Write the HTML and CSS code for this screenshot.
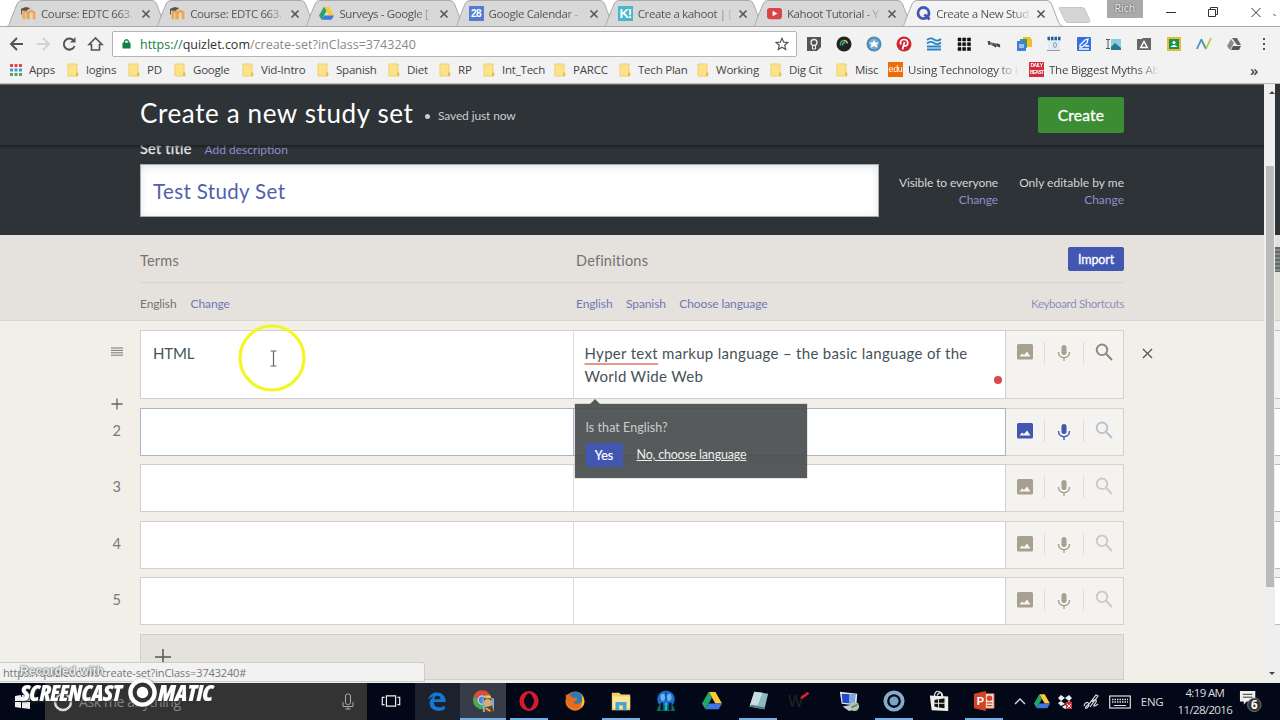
FILE: index.html
```
<!DOCTYPE html>
<html lang="en">
<head>
<meta charset="utf-8">
<title>Create a New Study Set</title>
<link rel="stylesheet" href="styles.css">
</head>
<body>
<svg class="defs" width="0" height="0">
  <defs>
    <symbol id="tab" viewBox="0 0 162 27"><path d="M0 26.5C4 26 3 24 5 19L11 4Q12.500 .5 16 .5H146Q149 .5 150.500 4L157 21Q159 26 162 26.500Z" stroke="#aaa"/></symbol>
    <symbol id="moodle" viewBox="0 0 16 14"><path d="M3 13V6q2-3 4 0v7M8 13V6q3-3 6 0v7" fill="none" stroke="#efa64b" stroke-width="2.700"/><path d="M0 2 5 0l5 1-4 3H1v4H0z" fill="#555"/></symbol>
    <symbol id="drive" viewBox="0 0 24 22"><path d="M8 0h8l8 14h-8z" fill="#fbc934"/><path d="M8 0 0 14l4 7 8-14z" fill="#23a566"/><path d="M8 14h16l-4 7H4z" fill="#3f76df"/></symbol>
    <symbol id="x" viewBox="0 0 10 10"><path d="M1.500 1.500l7 7m0-7-7 7" fill="none" stroke="currentColor" stroke-width="1.600"/></symbol>
    <symbol id="thinx" viewBox="0 0 10 10"><path d="M1.500 1.500l7 7m0-7-7 7" fill="none" stroke="currentColor" stroke-width="1"/></symbol>
    <symbol id="folder" viewBox="0 0 12 14"><path d="M1 1h9v9h1v3H1z" fill="#fde28a" stroke="#efcf6c"/><path d="M9 13v-3l2-1v4z" fill="#e5bd50"/></symbol>
    <symbol id="image" viewBox="0 0 16 16"><rect width="16" height="15.500" rx="1.500" fill="currentColor"/><path d="M2.500 12.500 5 9.500l2 1.500 3-3.500 3.500 5z" fill="#f8f6f2"/></symbol>
    <symbol id="mic" viewBox="0 0 14 18"><rect x="4.500" y="1" width="5" height="10" rx="2.500" fill="currentColor"/><path d="M1.500 8c0 7.500 11 7.500 11 0M7 13.500V17" fill="none" stroke="currentColor" stroke-width="1.400"/></symbol>
    <symbol id="search" viewBox="0 0 18 18"><circle cx="7" cy="6.800" r="5.300" fill="none" stroke="currentColor" stroke-width="1.900"/><path d="M11 10.800 17 17" stroke="currentColor" stroke-width="2"/></symbol>
  </defs>
</svg>

<header class="browser">
  <div class="tabs">
    <div class="tab"><svg class="shape"><use href="#tab"/></svg><svg class="fav"><use href="#moodle"/></svg><span class="label">Course: EDTC 663.</span><svg class="close"><use href="#x"/></svg></div>
    <div class="tab"><svg class="shape"><use href="#tab"/></svg><svg class="fav"><use href="#moodle"/></svg><span class="label">Course: EDTC 663.</span><svg class="close"><use href="#x"/></svg></div>
    <div class="tab"><svg class="shape"><use href="#tab"/></svg><svg class="fav"><use href="#drive"/></svg><span class="label">Surveys - Google [</span><svg class="close"><use href="#x"/></svg></div>
    <div class="tab"><svg class="shape"><use href="#tab"/></svg><span class="fav cal">28</span><span class="label">Google Calendar -</span><svg class="close"><use href="#x"/></svg></div>
    <div class="tab"><svg class="shape"><use href="#tab"/></svg><span class="fav kahoot">K!</span><span class="label">Create a kahoot | [</span><svg class="close"><use href="#x"/></svg></div>
    <div class="tab"><svg class="shape"><use href="#tab"/></svg><svg class="fav" viewBox="0 0 16 14"><rect y="1" width="16" height="12" rx="3" fill="#d9444b"/><path d="m6 4 5 3-5 3z" fill="#fff"/></svg><span class="label">Kahoot Tutorial - Y</span><svg class="close"><use href="#x"/></svg></div>
    <div class="tab active"><svg class="shape"><use href="#tab"/></svg><svg class="fav" viewBox="0 0 16 16"><circle cx="8" cy="7.500" r="5.900" fill="none" stroke="#4257b2" stroke-width="3"/><path d="m9 9 5.500 5.500" stroke="#4257b2" stroke-width="3"/></svg><span class="label">Create a New Stud</span><svg class="close"><use href="#x"/></svg></div>
    <svg class="newtab" viewBox="0 0 32 16"><path d="M1 .5h22q2 0 3 2l5 11q0 2-2 2H9q-2 0-3-2L.5 2Q0 .5 1 .5z" fill="#d4d4d4" stroke="#c6c6c6"/></svg>
    <span class="user">Rich</span>
    <svg class="winbtns" viewBox="0 0 120 26"><g fill="none" stroke="#333"><path d="M8 12.500h10M50.500 9.500h7v7h-7zM52.500 9.500v-2h7v7h-2M93.500 8l9 9m0-9-9 9"/><path d="m115.500 14 2 2"/></g></svg>
  </div>

  <div class="toolbar">
    <svg class="nav" viewBox="0 0 112 30"><g fill="none" stroke="#555" stroke-width="2"><path d="M23 17H11m6-6-6 6 6 6"/><path d="M37 17h12m-6-6 6 6-6 6" stroke="#d2d2d2"/><path d="M73.500 13.500A5.500 5.500 0 1 0 74.500 19"/><path d="M75.500 10v5.500H70z" fill="#555" stroke="none"/><path d="m89 17.500 6.500-6.500 6.500 6.500h-2.500V23h-8v-5.500z" stroke-width="1.600"/></g></svg>
    <div class="omnibox">
      <svg class="lock" viewBox="0 0 10 12"><rect x=".5" y="4.500" width="9" height="6.500" fill="#13804a"/><path d="M2.700 5V3q2.300-3.500 4.600 0v2" fill="none" stroke="#13804a" stroke-width="1.500"/></svg>
      <span class="url"><i>https://</i><b>quizlet.com</b>/create-set?inClass=3743240</span>
      <svg class="star" viewBox="0 0 14 14"><path d="m7 1.300 1.700 3.900 4.200.3-3.200 2.700 1 4.200L7 10.200l-3.700 2.200 1-4.200L1.100 5.500l4.200-.3z" fill="none" stroke="#555" stroke-width="1.200"/></svg>
    </div>
    <div class="exts">
      <svg viewBox="0 0 16 16"><path d="M1 1h14v10l-4 4H1z" fill="#555"/><circle cx="8" cy="6.500" r="3" fill="none" stroke="#eee" stroke-width="1.300"/><path d="M6.500 10v3h3v-3" fill="none" stroke="#eee"/></svg>
      <svg viewBox="0 0 16 16"><circle cx="8" cy="8" r="7.500" fill="#222"/><path d="M4.500 9.500Q4 5 8 4.500" fill="none" stroke="#39b54a" stroke-width="1.500"/><path d="M6.500 9.500q0-3 3-3" fill="none" stroke="#38a8d8" stroke-width="1.300"/><path d="M8 4.500q3 0 3.500 3" fill="none" stroke="#e6c529" stroke-width="1.300"/></svg>
      <svg viewBox="0 0 16 16"><circle cx="8" cy="8" r="7.500" fill="#4d8ab4"/><circle cx="8" cy="8" r="5.500" fill="#78a8cb"/><path d="m8 3.500 1.300 3H13l-2.500 2 1 3.500L8 10l-3.500 2 1-3.500L3 6.500h3.700z" fill="#fff"/></svg>
      <svg viewBox="0 0 16 16"><circle cx="8" cy="8" r="7.500" fill="#cf2730"/><path d="M5 8.500C3.500 6 5 3.500 8 3.500c5 0 4.500 6.500 1.300 6.500Q8 10 7.600 9M8.500 6 6.500 13.500" fill="none" stroke="#fff" stroke-width="1.700"/></svg>
      <svg viewBox="0 0 16 16"><path d="M1 4q3.500-3 7-.5t7-.5M1 7.500q3.500-3 7-.5t7-.5M1 10.500h14M1 13.500h14" fill="none" stroke="#2a83c6" stroke-width="1.800"/></svg>
      <svg viewBox="0 0 16 16"><path d="M2 2h3v3H2zm4.700 0h3v3h-3zm4.800 0h3v3h-3zM2 6.700h3v3H2zm4.700 0h3v3h-3zm4.800 0h3v3h-3zM2 11.500h3v3H2zm4.700 0h3v3h-3zm4.800 0h3v3h-3z" fill="#111" stroke="#111" stroke-width=".6"/></svg>
      <svg viewBox="0 0 16 16"><path d="m1 5 7 2 6 1v3l-7-1-4-2z" fill="#777"/><path d="m7 8 3 3m1-3 3 3M3 5v4" stroke="#333" stroke-width="1.500"/></svg>
      <svg viewBox="0 0 16 16"><path d="M7 1h7l2 3v7H7z" fill="#f4bd28"/><path d="M4 3h7v9H4z" fill="#2da561"/><path d="M1 5h7l2 2v8H1z" fill="#3f7fdb"/><path d="M3 9h5m-5 2h5" stroke="#fff"/></svg>
      <svg viewBox="0 0 16 16"><path d="M2 3h12v11H2z" fill="#e4eaf2"/><path d="M1.500 2.500h13" stroke="#245a92" stroke-width="3.500" stroke-dasharray="2.500 1"/><ellipse cx="9" cy="9" rx="1.500" ry="2.500" fill="none" stroke="#78a6cd"/><path d="M1 14.500h13" stroke="#999"/></svg>
      <svg viewBox="0 0 16 16"><rect x="1" y="1" width="14" height="14" rx="1" fill="#356fe0"/><path d="m4 9 5-5 3-1-1 4-5 4H4zM3 13h10M9 10h4" fill="none" stroke="#fff" stroke-width="1.300"/></svg>
      <svg viewBox="0 0 16 16"><path d="M5 3h10v11H5z" fill="#88cde4"/><path d="m5 11 4-4 6 5v2H5z" fill="#287594"/><path d="M0 3.500h4M2 4v8M0 12.500h4" stroke="#555"/></svg>
      <svg viewBox="0 0 16 16"><path d="M1 3h5l1-1h8v12H1z" fill="#666"/><path d="m8 5.500 3.300 6H4.700z" fill="none" stroke="#fff" stroke-width="1.500"/></svg>
      <svg viewBox="0 0 16 16"><path d="M2 2h12v12H2z" fill="#16955b" stroke="#efb72e" stroke-width="2"/><circle cx="8" cy="6.500" r="1.500" fill="#fff"/><path d="M4.500 11q3.500-4 7 0z" fill="#fff"/></svg>
      <svg viewBox="0 0 16 16"><g fill="none" stroke-width="1.800"><path d="m1 13 4-9" stroke="#4c8fca"/><path d="m5 3 5 10" stroke="#3e9cb2"/><path d="m10 13 5-11" stroke="#b7ca37"/></g></svg>
      <svg viewBox="0 0 16 16"><path d="M6 2h5l4 7h-4z" fill="#666"/><path d="M5 3 1 10l3 4 4-7z" fill="#8b8b8b"/><path d="M7 10h8l-2 4H5z" fill="#555"/></svg>
      <svg viewBox="0 0 16 16"><path d="M7 2h2v2H7zm0 5h2v2H7zm0 5h2v2H7z" fill="#555"/></svg>
    </div>
  </div>

  <nav class="bookmarks">
    <span><svg viewBox="0 0 12 12"><path d="M0 1.500h12" stroke="#e1473d" stroke-width="3" stroke-dasharray="3 1.500"/><path d="M0 6h12" stroke="#419be0" stroke-width="3" stroke-dasharray="3 1.500"/><path d="M0 10.500h12" stroke="#51a65d" stroke-width="3" stroke-dasharray="3 1.500"/></svg>Apps</span>
    <span><svg><use href="#folder"/></svg>logins</span>
    <span><svg><use href="#folder"/></svg>PD</span>
    <span><svg><use href="#folder"/></svg>Google</span>
    <span><svg><use href="#folder"/></svg>Vid-Intro</span>
    <span><svg><use href="#folder"/></svg>Spanish</span>
    <span><svg><use href="#folder"/></svg>Diet</span>
    <span><svg><use href="#folder"/></svg>RP</span>
    <span><svg><use href="#folder"/></svg>Int_Tech</span>
    <span><svg><use href="#folder"/></svg>PARCC</span>
    <span><svg><use href="#folder"/></svg>Tech Plan</span>
    <span><svg><use href="#folder"/></svg>Working</span>
    <span><svg><use href="#folder"/></svg>Dig Cit</span>
    <span><svg><use href="#folder"/></svg>Misc</span>
    <span class="fade"><b class="edu">edu</b>Using Technology to I</span>
    <span class="fade"><b class="beast"><em>DAILY</em>BEAST</b>The Biggest Myths Ab</span>
    <span class="more">»</span>
  </nav>
</header>

<div class="viewport">
  <main class="page">
    <div class="topbar"><h1>Create a new study set</h1><i class="dot"></i><span class="saved">Saved just now</span><button class="create">Create</button></div>
    <section class="titlebar">
      <div class="titleline"><span class="settitle">Set title</span><a>Add description</a></div>
      <div class="titlerow">
        <div class="titleinput">Test Study Set</div>
        <div class="perm everyone">Visible to everyone<a>Change</a></div>
        <div class="perm mine">Only editable by me<a>Change</a></div>
      </div>
    </section>
    <section class="colhead">
      <div class="headrow names"><span>Terms</span><span>Definitions</span><button class="import">Import</button></div>
      <div class="headrow langs"><span>English<a>Change</a></span><span><a>English</a><a>Spanish</a><a>Choose language</a></span><a class="keys">Keyboard Shortcuts</a></div>
    </section>
    <section class="rows">
      <div class="row first">
        <span class="num"><svg class="grip" viewBox="0 0 12 9"><path d="M0 1h12M0 3.400h12M0 5.800h12M0 8.200h12" stroke="#777"/></svg></span>
        <div class="term">HTML
          <svg class="pointer" viewBox="0 0 68 68"><circle cx="34" cy="34" r="32" fill="none" stroke="#f3f526" stroke-width="3.200"/><path d="M32.500 27h6M32.500 42h6M35.500 27v15" fill="none" stroke="#666" stroke-width="1.200"/></svg>
        </div>
        <div class="def"><u>Hyper text</u> markup language – the basic language of the<br>World Wide Web<i class="reddot"></i>
          <div class="popover"><div class="ask">Is that English?</div><div class="answers"><button>Yes</button><a>No, choose language</a></div></div>
        </div>
        <div class="tools"><svg class="im"><use href="#image"/></svg><i></i><svg class="mi"><use href="#mic"/></svg><i></i><svg class="se"><use href="#search"/></svg></div>
        <svg class="remove"><use href="#thinx"/></svg>
      </div>
      <div class="row current">
        <span class="num">2<svg class="plus" viewBox="0 0 12 12"><path d="M6 .5v11M.5 6h11" stroke="#666" stroke-width="1.300"/></svg></span><div class="term"></div><div class="def"></div>
        <div class="tools"><svg class="im"><use href="#image"/></svg><i></i><svg class="mi"><use href="#mic"/></svg><i></i><svg class="se"><use href="#search"/></svg></div>
      </div>
      <div class="row">
        <span class="num">3</span><div class="term"></div><div class="def"></div>
        <div class="tools"><svg class="im"><use href="#image"/></svg><i></i><svg class="mi"><use href="#mic"/></svg><i></i><svg class="se"><use href="#search"/></svg></div>
      </div>
      <div class="row">
        <span class="num">4</span><div class="term"></div><div class="def"></div>
        <div class="tools"><svg class="im"><use href="#image"/></svg><i></i><svg class="mi"><use href="#mic"/></svg><i></i><svg class="se"><use href="#search"/></svg></div>
      </div>
      <div class="row">
        <span class="num">5</span><div class="term"></div><div class="def"></div>
        <div class="tools"><svg class="im"><use href="#image"/></svg><i></i><svg class="mi"><use href="#mic"/></svg><i></i><svg class="se"><use href="#search"/></svg></div>
      </div>
      <div class="addrow"><svg viewBox="0 0 16 16"><path d="M8 0v16M0 8h16" stroke="#555" stroke-width="1.500"/></svg></div>
    </section>
  </main>
  <div class="scrollbar"><i class="up"></i><div class="thumb"></div><i class="down"></i></div>
  <div class="edge"><div class="edgedark"></div><div class="edgehead"><i></i></div><div class="edgerow tall"></div><div class="edgerow"></div><div class="edgerow"></div><div class="edgerow"></div><div class="edgerow"></div></div>
  <div class="status">https://quizlet.com/create-set?inClass=3743240#</div>
</div>

<footer class="taskbar">
  <svg class="start" viewBox="0 0 45 37"><path d="m15 13 6-1v6h-6zm7-1 8-1v7h-8zm-7 7h6v6l-6-1zm7 0h8v7l-8-1z" fill="#eee"/></svg>
  <div class="cortana"><svg class="ring" viewBox="0 0 20 20"><circle cx="10" cy="10" r="8" fill="none" stroke="#ddd" stroke-width="2.500"/></svg><span>Ask me anything</span><svg class="tmic" viewBox="0 0 12 18"><rect x="3.500" y="1" width="5" height="10.500" rx="2" fill="none" stroke="#aaa"/><path d="M1 9v4.500h10V9M6 13.500V16M3.500 16h5" fill="none" stroke="#aaa"/></svg></div>
  <div class="apps">
    <span><svg viewBox="0 0 24 24"><path d="M7 6.500h10v11H7zM5 8H2.500v8H5M19 8h2.500v8H19" fill="none" stroke="#eee" stroke-width="1.300"/></svg></span>
    <span class="lit"><svg viewBox="0 0 24 24"><path d="M2.500 11C4-1 22 0 21.500 13H8.500c0 7 8 7 12 4v4C13 25 3.500 22 4 14c.2-4 3-6 5-7-4 .5-5.500 2-6.500 4zM9 10h7c0-5-6.500-5-7 0z" fill="#1478d4"/></svg></span>
    <span class="open front"><svg viewBox="0 0 24 24"><circle cx="11" cy="11" r="10" fill="#4aa853"/><path d="M2 6a10 10 0 0 1 18 0h-9a5 5 0 0 0-4.500 6z" fill="#dd4b3c"/><path d="M20 6a10 10 0 0 1-8 15l4-8q1-4-2-7z" fill="#f6ca42"/><circle cx="11" cy="11" r="4.500" fill="#4384df" stroke="#fff"/><path d="M11 9h13v15H12z" fill="#89a9c6"/><circle cx="17" cy="14" r="4" fill="#d9ad71"/><path d="M13 12q4-5 8 0v-3h-8zM14 24v-5l8-2 2 7z" fill="#614327"/><path d="m15 20 5 3" stroke="#e2b344" stroke-width="2"/></svg></span>
    <span class="open"><svg viewBox="0 0 24 24"><ellipse cx="12" cy="12" rx="8" ry="8.500" fill="none" stroke="#d8192d" stroke-width="5"/><ellipse cx="12" cy="12" rx="4.500" ry="8.500" fill="#020817"/></svg></span>
    <span><svg viewBox="0 0 24 24"><circle cx="12" cy="12" r="10.500" fill="#ef7926"/><circle cx="13" cy="9" r="7.500" fill="#297caf"/><path d="M2 5q4 0 7 3l6 1-2 3-3 1q4 5 10-1Q18 22 9 20 1 17 2 5z" fill="#e66a1f"/><path d="M19 5q7 9-1 15 3-8 1-15z" fill="#f7c63c"/></svg></span>
    <span class="open"><svg viewBox="0 0 24 24"><path d="M2 3h8l2 2h10v17H2z" fill="#f1d06a"/><path d="M3 7h19v13H3z" fill="#fce596"/><path d="M6 22v-9h12v9h-4v-5h-4v5z" fill="#45a7d4"/></svg></span>
    <span><svg viewBox="0 0 24 24"><circle cx="12" cy="10" r="9.500" fill="#1c6fd0"/><path d="M4 17h16l2 6H2z" fill="#08706f"/><path d="M12 1.500v9" stroke="#0c3f86" stroke-width="1"/><ellipse cx="8.500" cy="8" rx="2.500" ry="4" fill="#68b5f2"/><ellipse cx="15.500" cy="8" rx="2.500" ry="4" fill="#68b5f2"/><path d="M7.500 14v8m9-8v8" stroke="#06182b" stroke-width="3"/><path d="M12 14v8" stroke="#24c4ba" stroke-width="2"/></svg></span>
    <span><svg viewBox="0 0 24 24"><use href="#drive" x="1" y="2" width="22" height="20"/></svg></span>
    <span class="open"><svg viewBox="0 0 24 24"><path d="m8 2 15 2-4 17-16-3z" fill="#8bb9c2"/><path d="m8 2 9 1-6 15-8-1z" fill="#c9dde0"/><path d="m2 18 16 3 2-2-15-3z" fill="#577c83"/></svg></span>
    <span><svg viewBox="0 0 24 24"><text x="-4" y="19" class="wletter">W</text><path d="m10 9 8-6" stroke="#db2027" stroke-width="3"/></svg></span>
    <span><svg viewBox="0 0 24 24"><path d="m2 2 19 2-1 13-16-2z" fill="#dfe7ef"/><path d="m4 4 15 1-1 10-13-1z" fill="#2148c9"/><path d="m12 4 7 1-1 10-6-1z" fill="#7da6df"/><path d="m5 18 10-2 5 5-8 2z" fill="#c4ccd0"/><circle cx="18" cy="18" r="5" fill="#b2c1b2"/><path d="m15 19 6-3" stroke="#458155" stroke-width="1.500"/></svg></span>
    <span class="open"><svg viewBox="0 0 24 24"><circle cx="12" cy="12" r="9.500" fill="none" stroke="#83adca" stroke-width="4"/><circle cx="12" cy="12" r="5" fill="#79a5c4"/></svg></span>
    <span><svg viewBox="0 0 24 24"><path d="m2 6 20 1v16L4 22z" fill="#eee"/><path d="M7 7c0-8 8-7 8 0M10 6c2-5 6-4 6 2" fill="none" stroke="#eee" stroke-width="1.300"/><path d="m7 11 4-1v4H7zm5-1 6-1v5h-6zm-5 5h4v4l-4-1zm5 0h6v5l-6-1z" fill="#111"/></svg></span>
    <span class="open"><svg viewBox="0 0 24 24"><path d="M12 4h11v16H12z" fill="#f5dfd8" stroke="#c94a2f"/><path d="M1 4 14 1v22L1 20z" fill="#cf4427"/><text x="4" y="16" class="ppt">P</text><path d="M15 14h6m-6 3h6" stroke="#ce4529" stroke-width="1.500"/><circle cx="18" cy="9" r="3" fill="#ce4529"/></svg></span>
  </div>
  <div class="tray">
    <svg viewBox="0 0 16 16"><path d="m3 10 5-5 5 5" fill="none" stroke="#ddd" stroke-width="1.300"/></svg>
    <svg viewBox="0 0 16 16"><use href="#drive" width="16" height="15"/></svg>
    <svg viewBox="0 0 16 16"><path d="m4 1 4 3-4 3-3-3zm8 0 3 3-3 3-4-3zM4 7l4 3-4 2-3-3zm8 0 3 2-3 3-4-2zM8 11l3 2-3 2-3-2z" fill="#eee"/><path d="M9 8h6v7H9z" fill="#d82e36"/><path d="m10 10 4 4m0-4-4 4" stroke="#fff"/></svg>
    <svg viewBox="0 0 16 16"><path d="M1 12c2-7 8-2 3 2-3 1-1-2 2-4l7-9 2 1-8 11M9 8c4-5 6-1 2 3-1 2 2 1 4-1" fill="none" stroke="#ddd" stroke-width="1.200"/></svg>
    <svg class="kbd" viewBox="0 0 22 14"><rect x=".7" y="1" width="20.600" height="12" fill="none" stroke="#ddd" stroke-width="1.200"/><path d="M3 4.500h16M3 7h16" stroke="#ddd" stroke-width="1.300" stroke-dasharray="1.500 1"/><path d="M5 10.500h12" stroke="#ddd"/></svg>
    <span class="lang">ENG</span>
    <span class="clock">4:19 AM<br>11/28/2016</span>
    <svg class="note" viewBox="0 0 24 24"><path d="M1 1h16v11H8l-3 3v-3H1z" fill="#eee"/><path d="M4 4.500h10M4 7.500h10" stroke="#333"/><circle cx="16" cy="15.500" r="7" fill="#333" stroke="#777"/><text x="12.500" y="20" class="count">6</text></svg>
  </div>
  <div class="watermark"><div class="recorded">Recorded with</div><div class="brand"><span class="w1">SCREENCAST</span><svg viewBox="0 0 32 32"><circle cx="16" cy="16" r="12.500" fill="#333" stroke="#fff" stroke-width="4.500"/><circle cx="16" cy="16" r="6" fill="#fff"/></svg><span class="w2">MATIC</span></div></div>
</footer>
</body>
</html>
```
FILE: styles.css
```
* { box-sizing: border-box; }
body { margin: 0; width: 1280px; height: 720px; overflow: hidden; display: flex; flex-direction: column; position: relative; font-family: "Lato", "Liberation Sans", sans-serif; color: #455358; background: #f2efe9; }
svg { display: block; flex: none; overflow: visible; }
.defs { position: absolute; }
button { border: 0; padding: 0; font-family: inherit; color: #fff; }
i, em { font-style: normal; }

.browser { height: 84px; flex: none; background: #f2f2f2; font-family: "Open Sans", "Noto Sans", sans-serif; font-size: 11.5px; color: #444; }
.tabs { height: 27px; background: #fff; display: flex; padding-left: 6px; border-bottom: 1px solid #aaa; }
.tab { position: relative; width: 149.2px; height: 27px; flex: none; display: flex; align-items: center; padding-left: 15px; color: #555; }
.shape { position: absolute; left: 0; top: 0; width: 162px; height: 27px; fill: #d8d8d8; }
.active .shape { fill: #f2f2f2; }
.fav { position: relative; width: 15px; height: 15px; margin-right: 5px; flex: none; }
.cal { background: #527bd1; color: #fff; font: bold 10px/15px "Liberation Sans", sans-serif; text-align: center; letter-spacing: -.4px; }
.kahoot { background: #45b8c5; color: #fff; font: bold 13px/15px "Liberation Sans", sans-serif; text-align: center; letter-spacing: -1px; }
.label { position: relative; width: 96px; margin-right: 4px; white-space: nowrap; letter-spacing: -.38px; -webkit-mask-image: linear-gradient(90deg, #000 80%, transparent 100%); mask-image: linear-gradient(90deg, #000 80%, transparent 100%); }
.close { position: relative; width: 10px; height: 10px; color: #555; }
.newtab { width: 32px; height: 16px; margin: 7px 0 0 8.600px; }
.user { width: 36px; height: 18px; margin-left: 16px; background: #aaa; color: #eee; text-shadow: 0 0 2px #333; font-size: 10.500px; line-height: 16px; text-align: center; }
.winbtns { width: 120px; height: 26px; margin-left: 15px; }

.toolbar { height: 30px; display: flex; align-items: flex-start; }
.nav { width: 112px; height: 30px; }
.omnibox { width: 685px; height: 26px; margin-top: 4px; display: flex; align-items: center; padding-left: 9px; border: 1px solid #b4b4b4; border-radius: 2px; background: #fff; }
.lock { width: 9px; height: 12px; }
.url { margin-left: 9px; font-size: 12.500px; color: #888; width: 635px; white-space: nowrap; }
.url i { color: #13804a; }
.url b { font-weight: 400; color: #333; }
.star { width: 14px; height: 14px; }
.exts { display: flex; gap: 14px; padding: 9px 0 0 8.500px; }
.exts svg { width: 16px; height: 16px; }

.bookmarks { height: 27px; display: grid; align-items: center; padding: 0 0 1px 10px; grid-template-columns: 57px 61px 46px 68px 75px 71px 51px 44px 71px 65px 78px 73px 66px 52px 141px 221px 20px; border-bottom: 1px solid #bbb; white-space: nowrap; letter-spacing: -.22px; }
.bookmarks span { display: flex; align-items: center; }
.bookmarks svg { width: 12px; height: 14px; margin-right: 7px; }
.bookmarks b { width: 15px; height: 15px; margin-right: 5px; color: #fff; flex: none; }
.edu { background: #ef6c0b; font: 9px/14px "Liberation Sans", sans-serif; letter-spacing: -.4px; text-align: center; }
.bookmarks .beast { background: #d12f3a; font: bold 5px/6px "Liberation Sans", sans-serif; letter-spacing: -.8px; text-align: center; }
.beast em { display: block; font-size: 5px; line-height: 7px; letter-spacing: -.5px; }
.fade { width: 131px; -webkit-mask-image: linear-gradient(90deg, #000 82%, transparent 100%); mask-image: linear-gradient(90deg, #000 82%, transparent 100%); }
.more { font-size: 15px; font-weight: 600; }

.viewport { height: 599px; flex: none; position: relative; display: flex; overflow: hidden; }
.page { width: 1264px; height: 599px; flex: none; overflow: hidden; }
a { color: #8792cb; }
.topbar { height: 61px; position: relative; background: #2e3337; padding: 0 140px; display: flex; align-items: center; box-shadow: 0 1px 3px #15191c; border-top: 1px solid #686c6e; }
h1 { margin: -4px 12px 0 0; width: 273px; white-space: nowrap; font-weight: 400; font-size: 26px; letter-spacing: .62px; color: #fff; }
.dot { width: 5px; height: 5px; border-radius: 50%; background: #ccc; margin-top: 2px; }
.saved { margin: 1px 0 0 8px; font-size: 12px; color: #ccc; letter-spacing: -.13px; }
.create { width: 86px; height: 36px; margin-left: auto; background: #3b8d34; font-size: 15.500px; font-weight: 400; -webkit-text-stroke: .35px #fff; border-radius: 2px; letter-spacing: .2px; }
.titlebar { height: 90px; background: #2e3337; padding-left: 140px; display: flex; flex-direction: column; }
.titleline { height: 19px; line-height: 8px; font-size: 14.500px; color: #e8e8e8; display: flex; gap: 13px; white-space: nowrap; }
.settitle { font-weight: 400; letter-spacing: .25px; -webkit-text-stroke: .25px #e8e8e8; }
.titleline a { font-size: 12px; line-height: 9px; }
.titlerow { display: flex; }
.titleinput { width: 739px; height: 53px; background: #fff; border: 1px solid #aaa; box-shadow: inset 0 2px 8px #e4e5ea; padding-left: 12px; font-size: 20.500px; line-height: 52px; color: #5061aa; letter-spacing: .36px; }
.perm { text-align: right; font-size: 12px; line-height: 17px; padding-top: 10px; color: #d5d5d5; white-space: nowrap; letter-spacing: -.1px; }
.perm a { display: block; }
.everyone { width: 119px; }
.mine { width: 126px; letter-spacing: 0; }
.colhead { height: 86px; background: #e5e2dd; border-bottom: 1px solid #dad7d1; padding: 0 140px; }
.headrow { width: 984px; display: grid; grid-template-columns: 436px 1fr auto; align-items: center; color: #737373; }
.names { height: 48px; border-bottom: 1px solid #d8d5d0; font-size: 14.500px; padding-top: 1px; letter-spacing: .2px; }
.names span { padding-top: 2px; }
.import { width: 56px; height: 24px; border-radius: 2px; background: #4257b2; font-size: 12.500px; -webkit-text-stroke: .3px #fff; letter-spacing: -.1px; }
.langs { height: 41px; font-size: 12px; letter-spacing: -.11px; }
.langs a { color: #7077b4; margin-right: 13.500px; }
.langs span:first-child a { margin-left: 14px; }
.langs .keys { font-size: 11.500px; margin: -1px 0 0; color: #8d91bb; letter-spacing: -.36px; }

.rows { padding-top: 9px; }
.row { height: 48px; margin-bottom: 8.400px; display: grid; grid-template-columns: 140px 433px 433px 118px 60px; }
.first { height: 69px; margin-bottom: 9px; }
.num { position: relative; padding: 14px 19px 0 0; text-align: right; font-size: 14.500px; color: #777; }
.grip { width: 12px; height: 9px; margin: 3px -1.500px 0 auto; }
.plus { position: absolute; left: 111px; top: -10px; width: 12px; height: 12px; }
.term, .def { position: relative; background: #fff; border: 1px solid #cfcfcf; padding: 11px 11px 0; font-size: 15px; line-height: 23px; white-space: nowrap; }
.def { border-left-color: #ddd; letter-spacing: .31px; padding-left: 10.500px; }
.term { border-right: 0; letter-spacing: -.2px; padding-left: 12px; }
.current .term, .current .def { border-color: #b0b1cc; }
.pointer { position: absolute; left: 96.500px; top: -7px; width: 68px; height: 68px; }
.def u { text-decoration: underline #e9948d 2px; text-underline-offset: 4px; text-decoration-skip-ink: none; }
.reddot { position: absolute; width: 8px; height: 8px; border-radius: 50%; background: #d9484e; right: 3px; top: 45px; }
.tools { border: 1px solid #d6d3cd; border-left: 0; background: #f5f3f0; display: flex; align-items: flex-start; padding: 11px 0 0 9.500px; color: #a79f90; }
.tools i { width: 1px; height: 22px; background: #ddd; }
.im { width: 16px; height: 16px; margin: 2px 11px 0 1px; }
.mi { width: 14px; height: 18px; margin: 2px 12.500px 0 12px; }
.se { width: 18px; height: 18px; margin: 1px 0 0 10.500px; color: #cec9c4; }
.row:not(.first) .im, .row:not(.first) .mi { margin-top: 3px; }
.first .se { color: #918779; }
.current .tools { color: #4257b2; }
.current .se { color: #bcbed1; }
.remove { width: 13px; height: 13px; margin: 17px 0 0 17px; color: #555; }
.popover { position: absolute; z-index: 2; left: 1px; top: 73px; width: 232px; height: 74px; background: rgba(73,77,78,.93); padding: 13px 11px 0 10.500px; font-size: 12.500px; color: #ccc; box-shadow: 0 0 1px #666; line-height: 22px; letter-spacing: .05px; }
.popover::before { content: ""; position: absolute; left: 15px; top: -5px; border: 5px solid transparent; border-top: 0; border-bottom-color: #55595a; }
.answers { display: flex; align-items: center; gap: 14px; margin-top: 4px; }
.answers button { width: 37px; height: 24px; background: #4257b2; font-size: 12.500px; -webkit-text-stroke: .2px #fff; }
.answers a { color: #eee; text-decoration: underline; letter-spacing: -.2px; }
.addrow { width: 984px; height: 46px; margin-left: 140px; background: #e5e2dd; border: 1px solid #d0ceca; padding: 14px 14px 0 13.500px; }
.addrow svg { width: 16px; height: 16px; }

.scrollbar { width: 11px; height: 599px; background: #efefef; display: flex; flex-direction: column; align-items: center; }
.thumb { width: 8px; height: 421px; margin-top: 72px; background: #bbb; }
.up { border: 3px solid transparent; border-top: 0; border-bottom-color: #444; margin-top: 7px; margin-left: 5px; height: 3px; }
.down { border: 3px solid transparent; border-bottom: 0; border-top-color: #444; margin-top: 85px; margin-left: 5px; }
.edge { width: 5px; background: #f1efeb; }
.edgedark { height: 151px; background: #2e3337; }
.edgehead { height: 86px; background: #e5e2dd; padding-top: 12px; border-bottom: 1px solid #ccc; margin-bottom: 9px; }
.edgehead i { display: block; height: 25px; background: repeating-linear-gradient(#686579 0 2px, #81947b 2px 4px); }
.edgerow { height: 48px; background: #fff; border: solid #bbb; border-width: 1px 0; margin-bottom: 8.400px; }
.tall { height: 69px; background: #f5f3f0; margin-bottom: 9px; }
.status { position: absolute; left: 0; bottom: 1px; width: 425px; height: 20px; background: #f2f2f2; border: 1px solid #ccc; border-left: 0; border-radius: 0 3px 0 0; padding-left: 3px; font: 11px/19px "Open Sans", sans-serif; color: #777; letter-spacing: -.14px; }

.taskbar { position: relative; height: 37px; flex: none; display: flex; background: #020817; color: #ddd; font-family: "Open Sans", sans-serif; }
.start { width: 45px; height: 37px; }
.cortana { width: 322px; height: 37px; background: #333; display: flex; align-items: center; color: #888; font-size: 14px; letter-spacing: -.4px; }
.ring { width: 20px; height: 20px; margin: 0 6px 0 8px; }
.cortana span { width: 263px; }
.tmic { width: 12px; height: 18px; }
.apps { display: flex; }
.apps span { width: 45.800px; height: 37px; display: flex; justify-content: center; align-items: center; border-bottom: 2px solid transparent; }
.apps span:first-child { width: 47.500px; }
.apps span:nth-child(n+10) { width: 45.100px; }
.apps svg { width: 22px; height: 22px; }
.apps .lit { background: #1b222d; }
.apps .open { background: linear-gradient(#76aee4, #76aee4) center 100% / 38px 2px no-repeat border-box; }
.apps .front { background: linear-gradient(#76aee4, #76aee4) bottom / 100% 2px no-repeat border-box, #363c48; }
.wletter { font: 17px "Liberation Sans", sans-serif; fill: #252525; }
.ppt { font: bold 12px "Liberation Sans", sans-serif; fill: #fff; }
.tray { display: grid; grid-template-columns: 22.500px 22.500px 26px 26px 32px 30px 68px 24px; align-items: center; margin-left: 5.500px; }
.tray svg { width: 16px; height: 16px; }
.tray .kbd { width: 22px; height: 14px; }
.lang { font-size: 11.500px; letter-spacing: -.3px; }
.clock { text-align: center; font-size: 11.500px; line-height: 17px; letter-spacing: -.65px; padding-bottom: 2px; }
.tray .note { width: 23px; height: 23px; }
.count { font: bold 12px "Open Sans", sans-serif; fill: #fff; }
.watermark { position: absolute; left: 20px; top: -19px; color: #fff; }
.recorded { height: 15px; font: bold 12px/15px "Liberation Sans", sans-serif; color: #eee; text-shadow: 0 0 2px #555, 0 0 1px #555; letter-spacing: .1px; }
.brand { height: 26px; display: flex; align-items: center; font: italic bold 23px/26px "Open Sans", sans-serif; filter: drop-shadow(1px 1px 1px #333); }
.brand svg { width: 31px; height: 31px; }
.w1, .w2 { font-weight: 800; letter-spacing: -.5px; transform-origin: left; white-space: nowrap; font-stretch: condensed; }
.w1 { width: 107px; transform: scaleX(.98); }
.w2 { width: 60px; transform: scaleX(1.02); }
```
